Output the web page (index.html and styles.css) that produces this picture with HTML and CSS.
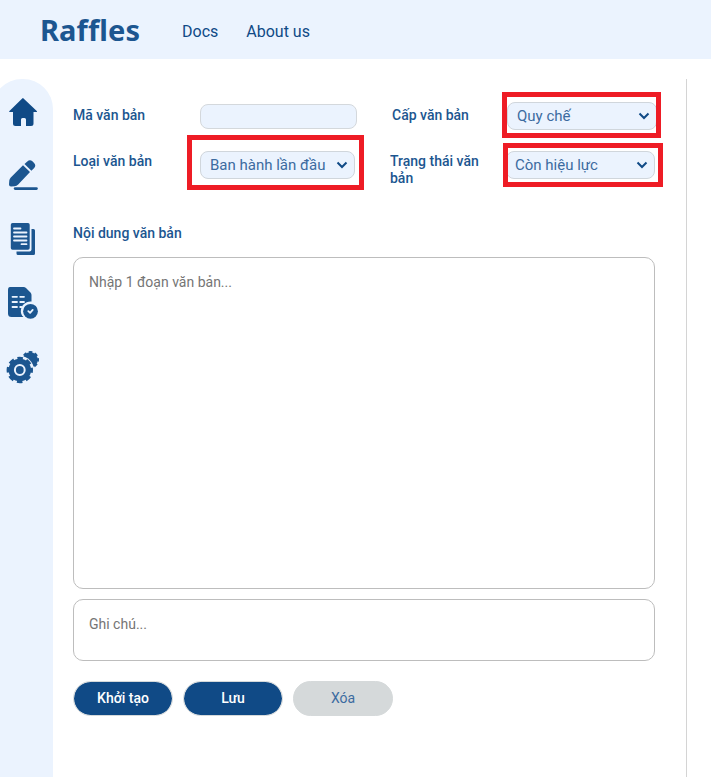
FILE: index.html
```html
<!DOCTYPE html>
<html lang="vi">
<head>
<meta charset="utf-8">
<title>Raffles</title>
<link rel="stylesheet" href="styles.css">
</head>
<body>
<header class="topbar">
  <a class="brand">Raffles</a>
  <nav class="nav"><a>Docs</a><a>About us</a></nav>
</header>
<div class="layout">
  <aside class="sidebar">
    <svg class="icon home" viewBox="0 0 32 32"><path d="M15 3 29 16.3Q29.3 17 28.5 17H25.500V28.500Q25.500 31 23 31H18V24.500Q18 23 16.500 23H14.500Q13 23 13 24.500V31H7.500Q5 31 5 28.500V17H1.800Q.7 17 1.200 16.300L14.200 3.500Q15 2.500 15.800 3.500Z"/></svg>
    <svg class="icon" viewBox="0 0 32 32"><path d="M15 6.200 22 13 10.200 25.500Q8.700 27 6.500 27.200L3 27.500Q1 27.500 1 25.500L1.300 21.500Q1.500 19.800 2.800 18.500ZM16.500 4.900 19.300 2.400Q22 .2 24.400 2.300L26.300 4.200Q28.300 6.500 26.200 9.100L23.400 11.700Z"/><rect x="5.800" y="28.300" width="24" height="2.600" rx="1.300"/></svg>
    <svg class="icon docs" viewBox="0 0 32 32"><path d="M4.500 0H20Q21.700 0 21.700 1.700V25Q21.700 26.700 20 26.700H4.500Q2.800 26.700 2.800 25V1.700Q2.800 0 4.500 0ZM23.500 6H25.500Q27 6 27 7.500V30.500Q27 32 25.500 32H10Q8.500 32 8.500 30.500V28.500H21.500Q23.500 28.500 23.500 26.500Z"/><path class="lines" d="M6 5.500H12.500M6 9.500H18.500M6 13.500H18.500M6 17.500H18.500M13.500 21.200H18.500"/></svg>
    <svg class="icon" viewBox="0 0 32 32"><path d="M2 0H15.500Q17 0 18 1L22.500 5.500Q23.500 6.500 23.500 8V14.500A9.600 9.600 0 0 0 13.300 27Q14 29 15.500 30H3.500Q0 30 0 26.500V3Q0 0 2 0Z"/><circle cx="22.500" cy="24.300" r="7.400"/><path class="lines" d="M4.500 9.800H9M12.200 9.800H16M4.500 15H9M12.200 15H16M4.500 20H9M12.200 20H13.500M20.300 24.200 22.100 25.800 24.700 22.900"/></svg>
    <svg class="icon gears" viewBox="0 0 32 32"><circle cx="23.300" cy="8.700" r="7.500"/><circle class="teeth small" cx="23.300" cy="8.700" r="7.300"/><circle class="halo" cx="12.800" cy="19" r="14"/><circle cx="12.800" cy="19" r="11.300"/><circle class="teeth" cx="12.800" cy="19" r="11.500"/><circle class="hub" cx="12.800" cy="19" r="4.900"/></svg>
  </aside>
  <main class="content">
    <form class="form">
      <div class="fields">
        <label>Mã văn bản</label>
        <div class="control code"><input type="text" aria-label="Mã văn bản"></div>
        <label class="level">Cấp văn bản</label>
        <div class="control top marked mark-level"><div class="select">Quy chế<svg viewBox="0 0 12 8"><path d="M1.500 1.500 6 6 10.500 1.500"/></svg></div></div>
        <label>Loại văn bản</label>
        <div class="control marked mark-type"><div class="select type">Ban hành lần đầu<svg viewBox="0 0 12 8"><path d="M1.500 1.500 6 6 10.500 1.500"/></svg></div></div>
        <label>Trạng thái văn bản</label>
        <div class="control marked mark-status"><div class="select status">Còn hiệu lực<svg viewBox="0 0 12 8"><path d="M1.500 1.500 6 6 10.500 1.500"/></svg></div></div>
      </div>
      <label class="heading">Nội dung văn bản</label>
      <textarea class="body-text" placeholder="Nhập 1 đoạn văn bản..."></textarea>
      <textarea class="note" placeholder="Ghi chú..."></textarea>
      <div class="actions">
        <button type="button">Khởi tạo</button>
        <button type="button">Lưu</button>
        <button type="button" class="muted">Xóa</button>
      </div>
    </form>
  </main>
</div>
</body>
</html>
```

FILE: styles.css
```css
*, *::after { box-sizing: border-box; }
body {
  margin: 0;
  height: 777px;
  overflow: hidden;
  background: #fff;
  color: #1c5690;
  font-family: Roboto, "Liberation Sans", sans-serif;
}
.topbar {
  display: flex;
  align-items: center;
  height: 59px;
  padding-left: 40px;
  background: #ebf3fe;
}
.brand {
  width: 142px;
  font: 700 29px/40px "Noto Sans", sans-serif;
  letter-spacing: 0.1px;
  color: #1c5690;
}
.nav { display: flex; gap: 28px; padding-top: 4px; font-size: 16px; color: #104a86; }
.layout { display: flex; height: 698px; margin-top: 20px; }
.sidebar {
  display: flex;
  flex-direction: column;
  gap: 32px;
  width: 61px;
  margin-left: -8px;
  padding: 16px 0 0 15px;
  border-radius: 30px 30px 0 0;
  background: #ebf3fe;
}
.icon { display: block; width: 32px; height: 32px; fill: #1c5690; overflow: visible; }
.home { fill: #104a86; margin-left: 1px; }
.icon:nth-child(2), .docs, .icon:nth-child(4) { margin-left: 1px; }
.lines { fill: none; stroke: #ebf3fe; stroke-width: 1.8; stroke-linecap: round; stroke-linejoin: round; }
.teeth { fill: none; stroke: #1c5690; stroke-width: 3.4; stroke-dasharray: 5.4 3.632; stroke-dashoffset: 2.7; stroke-linejoin: round; }
.teeth.small { stroke-width: 2.8; stroke-dasharray: 3.4 2.333; stroke-dashoffset: 1.7; }
.halo { fill: #ebf3fe; }
.hub { fill: #1c5690; stroke: #ebf3fe; stroke-width: 2; }
.content { width: 634px; padding-left: 20px; border-right: 1px solid #d4d4d4; }
.form { width: 582px; }
.fields {
  display: grid;
  grid-template-columns: 127px 190px 116px 149px;
  grid-template-rows: 49px 75px;
  padding-top: 23px;
}
label { font-size: 14px; font-weight: 500; line-height: 17px; padding-top: 5px; color: #1c5690; }
.fields label:nth-of-type(n+3) { padding-top: 2px; width: 95px; }
.level { padding-left: 2px; }
.control { position: relative; }
.code { padding-top: 2px; }
input {
  display: block;
  width: 157px;
  height: 25px;
  border: 1px solid #d4d8dc;
  border-radius: 8px;
  background: #ebf3fe;
}
.select {
  display: flex;
  align-items: center;
  justify-content: space-between;
  width: 150px;
  height: 28px;
  padding: 0 6px 0 9px;
  border: 1px solid #d0d6dc;
  border-radius: 8px;
  background: #ebf3fe;
  color: #3c6ba0;
  font-size: 15px;
}
.top .select { margin-left: 1px; }
.type { width: 155px; }
.status { width: 149px; padding-left: 8px; }
.select svg { width: 12px; height: 8px; fill: none; stroke: #104a86; stroke-width: 2; }
.marked::after { content: ""; position: absolute; border: 5px solid #ee1c25; pointer-events: none; }
.mark-level::after { left: -4px; top: -10px; width: 159px; height: 46px; }
.mark-type::after { left: -13px; top: -16px; width: 177px; height: 55px; }
.mark-status::after { left: -3px; top: -8px; width: 160px; height: 44px; }
.heading { display: block; height: 32px; padding-top: 0; margin-top: -1px; }
textarea {
  display: block;
  width: 582px;
  padding: 15px;
  resize: none;
  border: 1px solid #bdbdbd;
  border-radius: 10px;
  outline: 0;
  font: 14px/18px Roboto, sans-serif;
}
textarea::placeholder { color: #757575; }
.body-text { height: 332px; }
.note { height: 62px; margin-top: 10px; }
.actions { display: flex; gap: 10px; margin-top: 20px; }
button {
  width: 100px;
  height: 35px;
  padding: 0 0 2px;
  border: 1px solid #d5d9da;
  border-radius: 18px;
  background: #104a86;
  background-clip: padding-box;
  color: #fff;
  font: 500 14px Roboto, sans-serif;
}
.muted { background: #d5d9da; color: #3c6ba0; font-weight: 400; }
```
